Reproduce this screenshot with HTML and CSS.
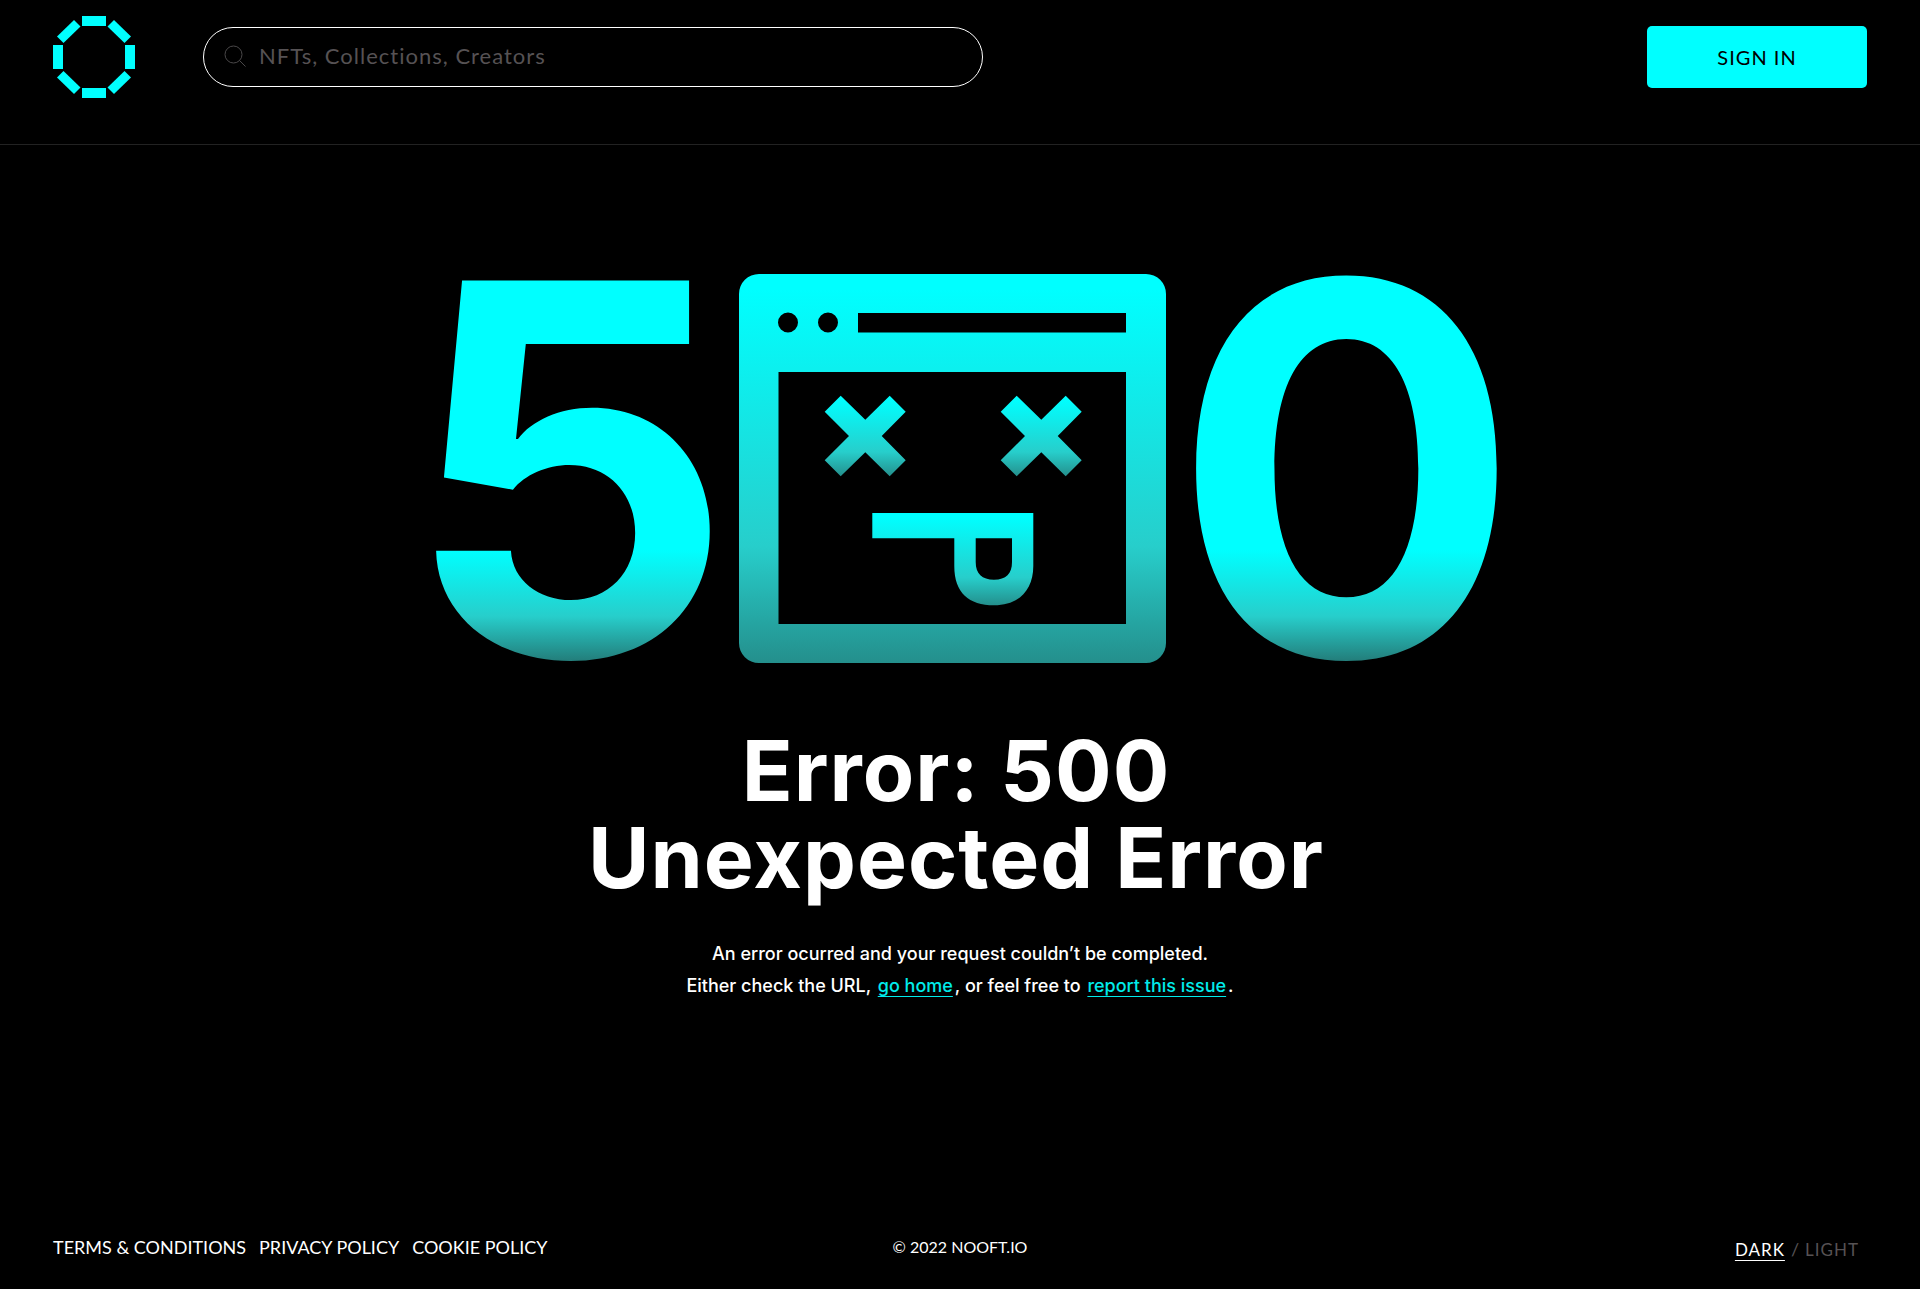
FILE: index.html
```
<!DOCTYPE html>
<html lang="en">

<head>
	<meta charset="UTF-8">
	<meta name="viewport" content="width=device-width, initial-scale=1.0">
	<link rel="stylesheet" href="styles.css">
	<title>Error 500 | NOOFT.IO</title>
</head>

<body>
	<header class="header">
		<a class="logo" href="#" aria-label="Nooft home">
			<svg width="82" height="82" viewBox="0 0 82 82" fill="#00ffff">
				<rect x="29" y="0" width="24" height="10" />
				<rect x="29" y="72" width="24" height="10" />
				<rect x="0" y="29" width="10" height="24" />
				<rect x="72" y="29" width="10" height="24" />
				<path d="M21 4L27.500 10.500L10.500 27L4 20.500Z" />
				<path d="M61 4L54.500 10.500L71.500 27L78 20.500Z" />
				<path d="M21 78L27.500 71.500L10.500 55L4 61.500Z" />
				<path d="M61 78L54.500 71.500L71.500 55L78 61.500Z" />
			</svg>
		</a>
		<form class="search">
			<svg class="search-icon" width="22" height="22" viewBox="0 0 22 22" fill="none" stroke="#4b494a">
				<circle cx="9.500" cy="9.500" r="8.500" />
				<path d="M15.500 15.500L21.500 21.500" />
			</svg>
			<input class="search-input" type="text" placeholder="NFTs, Collections, Creators" aria-label="Search">
		</form>
		<button class="sign-in" type="button">SIGN IN</button>
	</header>

	<main class="main">
		<div class="hero">
			<span class="digit">5</span>
			<svg class="window" width="427" height="389" viewBox="0 0 427 389">
				<defs>
					<linearGradient id="fade" x1="0" y1="0" x2="0" y2="1">
						<stop offset="0.040" stop-color="#00ffff" />
						<stop offset="0.700" stop-color="#27cecb" />
						<stop offset="1" stop-color="#248f8c" />
					</linearGradient>
				</defs>
				<!-- browser window -->
				<path fill="url(#fade)" fill-rule="evenodd" d="M20 0H407A20 20 0 0 1 427 20V369A20 20 0 0 1 407 389H20A20 20 0 0 1 0 369V20A20 20 0 0 1 20 0Z
					M39 48.500a10 10 0 1 0 20 0a10 10 0 1 0 -20 0Z
					M79 48.500a10 10 0 1 0 20 0a10 10 0 1 0 -20 0Z
					M119 39H387V58.500H119Z
					M39.500 98H387V350H39.500Z" />
				<!-- eyes -->
				<path fill="url(#fade)" d="M101.700 121.700L126.300 145.700L150.700 121.700L166.700 137.700L142.700 162L166.700 186.300L150.700 202.300L126.300 178.300L101.700 202.300L85.700 186.300L110 162L85.700 137.700Z" />
				<path fill="url(#fade)" d="M277.700 121.700L302.300 145.700L326.700 121.700L342.700 137.700L318.700 162L342.700 186.300L326.700 202.300L302.300 178.300L277.700 202.300L261.700 186.300L286 162L261.700 137.700Z" />
				<!-- mouth -->
				<path fill="url(#fade)" fill-rule="evenodd" d="M133.300 239H294.300V292C294.300 316 280 331.300 255 331.300C230 331.300 215.300 319 215.300 292V264.300H133.300Z
					M236.700 264.300V288C236.700 300 243 305.700 255 305.700C267 305.700 273 300 273 288V264.300Z" />
			</svg>
			<span class="digit">0</span>
		</div>
		<h1 class="title">Error: 500<br>Unexpected Error</h1>
		<p class="message">An error ocurred and your request couldn’t be completed.<br>
			Either check the URL, <a class="link" href="#">go home</a>, or feel free to <a class="link" href="#">report this issue</a>.</p>
	</main>

	<footer class="footer">
		<nav class="footer-links">
			<a href="#">TERMS &amp; CONDITIONS</a>
			<a href="#">PRIVACY POLICY</a>
			<a href="#">COOKIE POLICY</a>
		</nav>
		<span class="copyright">© 2022 NOOFT.IO</span>
		<div class="theme">
			<button class="theme-btn active" type="button">DARK</button>
			<span>/</span>
			<button class="theme-btn" type="button">LIGHT</button>
		</div>
	</footer>
</body>

</html>
```

FILE: styles.css
```
* {
	box-sizing: border-box;
}

body {
	margin: 0;
	min-height: 100vh;
	display: flex;
	flex-direction: column;
	background: #000;
	color: #fff;
	font-family: Lato, "Liberation Sans", sans-serif;
}

button {
	border: none;
	background: none;
	color: inherit;
	font-family: inherit;
	cursor: pointer;
}

.header {
	display: flex;
	align-items: center;
	padding: 16px 53px 46px;
	border-bottom: 1px solid #222;
}

.logo {
	display: flex;
	margin-right: 68px;
}

.search {
	flex: 0 1 780px;
	display: flex;
	align-items: center;
	gap: 13px;
	height: 60px;
	padding: 0 20px 2px;
	border: 1px solid #fff;
	border-radius: 30px;
}

.search-input {
	flex: 1;
	min-width: 0;
	padding: 0 0 2px;
	border: none;
	outline: none;
	background: none;
	color: #fff;
	font-family: inherit;
	font-size: 22px;
	letter-spacing: 1px;
}

.search-input::placeholder {
	color: #565254;
	opacity: 1;
}

.sign-in {
	width: 220px;
	height: 62px;
	margin-left: auto;
	border-radius: 5px;
	background: #00ffff;
	color: #000;
	font-size: 20px;
	letter-spacing: 1px;
}

.main {
	flex: 1;
	display: flex;
	flex-direction: column;
	align-items: center;
	padding-top: 129px;
	text-align: center;
}

.hero {
	display: flex;
	align-items: center;
	gap: 6px;
	padding-left: 4px;
}

.digit {
	font-family: Inter, sans-serif;
	font-size: 516px;
	font-weight: 700;
	line-height: 389px;
	color: transparent;
	background: linear-gradient(#00ffff 71%, #27cecb 88%, #237a77);
	-webkit-background-clip: text;
	background-clip: text;
}

.title {
	margin: 64px 0 0;
	padding-right: 8px;
	font-family: Inter, sans-serif;
	font-size: 84px;
	font-weight: 700;
	line-height: 87px;
	letter-spacing: 1px;
}

.message {
	margin: 37px 0 0;
	font-family: Inter, sans-serif;
	font-size: 18px;
	font-weight: 500;
	line-height: 32px;
}

.link {
	margin: 0 2px;
	color: #00ebeb;
	text-underline-offset: 4px;
}

.footer {
	display: grid;
	grid-template-columns: 1fr auto 1fr;
	align-items: center;
	padding: 0 53px 28px;
	font-size: 18px;
	line-height: 24px;
}

.footer-links {
	display: flex;
	gap: 13px;
}

.footer-links a {
	color: #fff;
	text-decoration: none;
}

.copyright {
	font-size: 16px;
}

.theme {
	display: flex;
	justify-content: flex-end;
	gap: 6px;
	padding: 4px 8px 0 0;
	color: #565254;
}

.theme-btn {
	padding: 0;
	font-size: 17px;
	letter-spacing: 1px;
}

.active {
	text-decoration: underline;
	text-underline-offset: 4px;
	color: #fff;
}
```
